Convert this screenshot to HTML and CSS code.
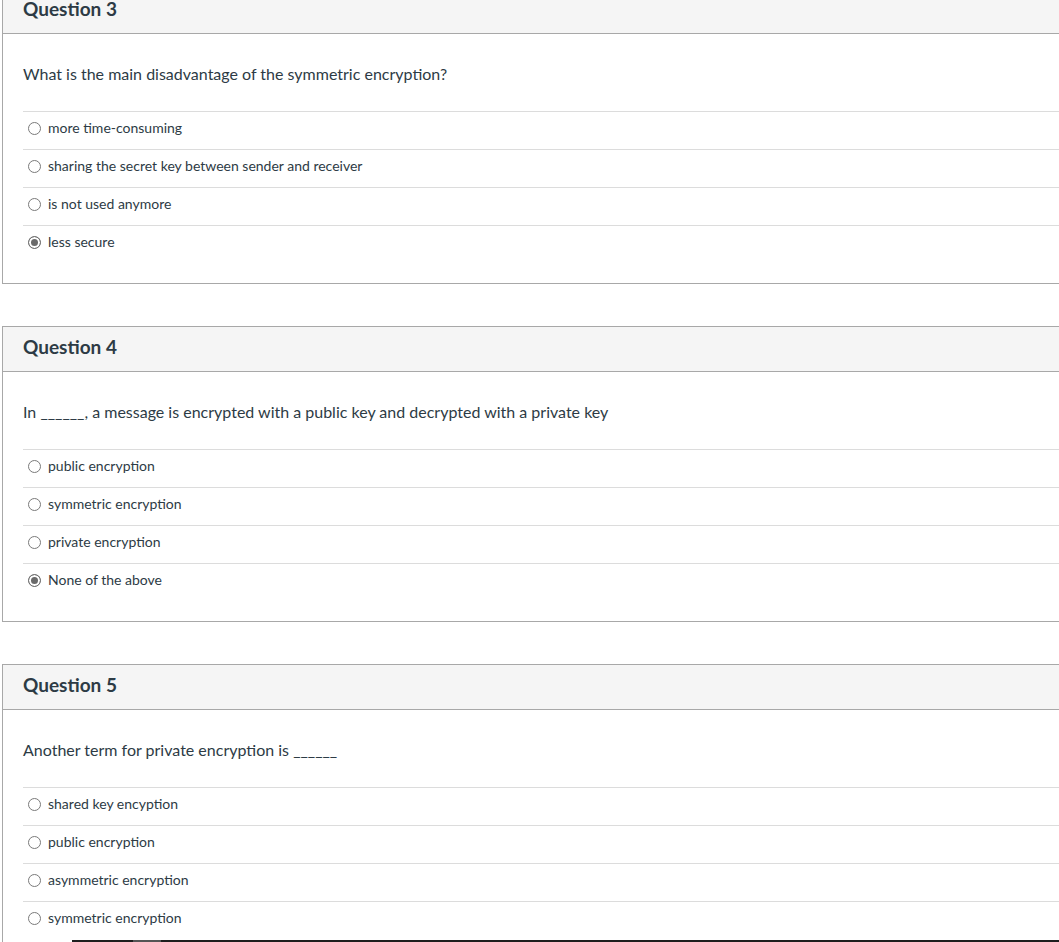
FILE: index.html
```html
<!DOCTYPE html>
<html>
<head>
<meta charset="utf-8">
<link rel="stylesheet" href="styles.css">
</head>
<body>
<div class="page">
  <div class="card">
    <div class="card-header">Question 3</div>
    <div class="question-text">What is the main disadvantage of the symmetric encryption?</div>
    <div class="answers">
      <div class="answer"><span class="radio"></span><span class="label">more time-consuming</span></div>
      <div class="answer"><span class="radio"></span><span class="label">sharing the secret key between sender and receiver</span></div>
      <div class="answer"><span class="radio"></span><span class="label">is not used anymore</span></div>
      <div class="answer"><span class="radio checked"></span><span class="label">less secure</span></div>
    </div>
  </div>
  <div class="card">
    <div class="card-header">Question 4</div>
    <div class="question-text">In ______, a message is encrypted with a public key and decrypted with a private key</div>
    <div class="answers">
      <div class="answer"><span class="radio"></span><span class="label">public encryption</span></div>
      <div class="answer"><span class="radio"></span><span class="label">symmetric encryption</span></div>
      <div class="answer"><span class="radio"></span><span class="label">private encryption</span></div>
      <div class="answer"><span class="radio checked"></span><span class="label">None of the above</span></div>
    </div>
  </div>
  <div class="card">
    <div class="card-header">Question 5</div>
    <div class="question-text">Another term for private encryption is ______</div>
    <div class="answers">
      <div class="answer"><span class="radio"></span><span class="label">shared key encyption</span></div>
      <div class="answer"><span class="radio"></span><span class="label">public encryption</span></div>
      <div class="answer"><span class="radio"></span><span class="label">asymmetric encryption</span></div>
      <div class="answer"><span class="radio"></span><span class="label">symmetric encryption</span></div>
    </div>
  </div>
</div>
<div class="bottom-bar"><span class="bar-thumb"></span></div>
</body>
</html>
```
FILE: styles.css
```css
html, body {
  margin: 0;
  padding: 0;
  background: #fff;
  overflow: hidden;
}
body {
  font-family: Lato, "Open Sans", sans-serif;
  color: #2d3b45;
}
.page {
  margin-top: -12px;
  padding-left: 2px;
  width: 1120px;
  display: flex;
  flex-direction: column;
  gap: 42px;
}
.card {
  border: 1px solid #a8a8a8;
  background: #fff;
}
.card-header {
  background: #f5f5f5;
  border-bottom: 1px solid #a8a8a8;
  height: 40px;
  line-height: 40px;
  padding: 0 20px 4px;
  font-size: 19px;
  font-weight: 700;
  color: #2d3b45;
}
.question-text {
  padding: 28px 20px 0;
  font-size: 16px;
  line-height: 24px;
  margin-bottom: 25px;
}
.answers {
  margin-left: 20px;
  padding-bottom: 20px;
}
.answer {
  border-top: 1px solid #dcdcdc;
  height: 38px;
  box-sizing: border-box;
  display: flex;
  align-items: center;
  padding-left: 5px;
  padding-bottom: 5px;
  font-size: 14px;
  line-height: 20px;
}
.radio {
  width: 13px;
  height: 13px;
  box-sizing: border-box;
  border: 1px solid #7a7a7a;
  border-radius: 50%;
  background: #fff;
  flex: none;
  margin-right: 7px;
}
.radio.checked {
  border-color: #6e6e6e;
  background: #6a6a6a;
  box-shadow: inset 0 0 0 2px #fff;
}
.label {
  color: #2d3b45;
}
.bottom-bar {
  position: fixed;
  left: 72px;
  right: 0;
  bottom: 0;
  height: 2px;
  background: #1e1e1e;
}
.bar-thumb {
  position: absolute;
  left: 61px;
  width: 28px;
  top: 0;
  height: 2px;
  background: #555;
}
```
